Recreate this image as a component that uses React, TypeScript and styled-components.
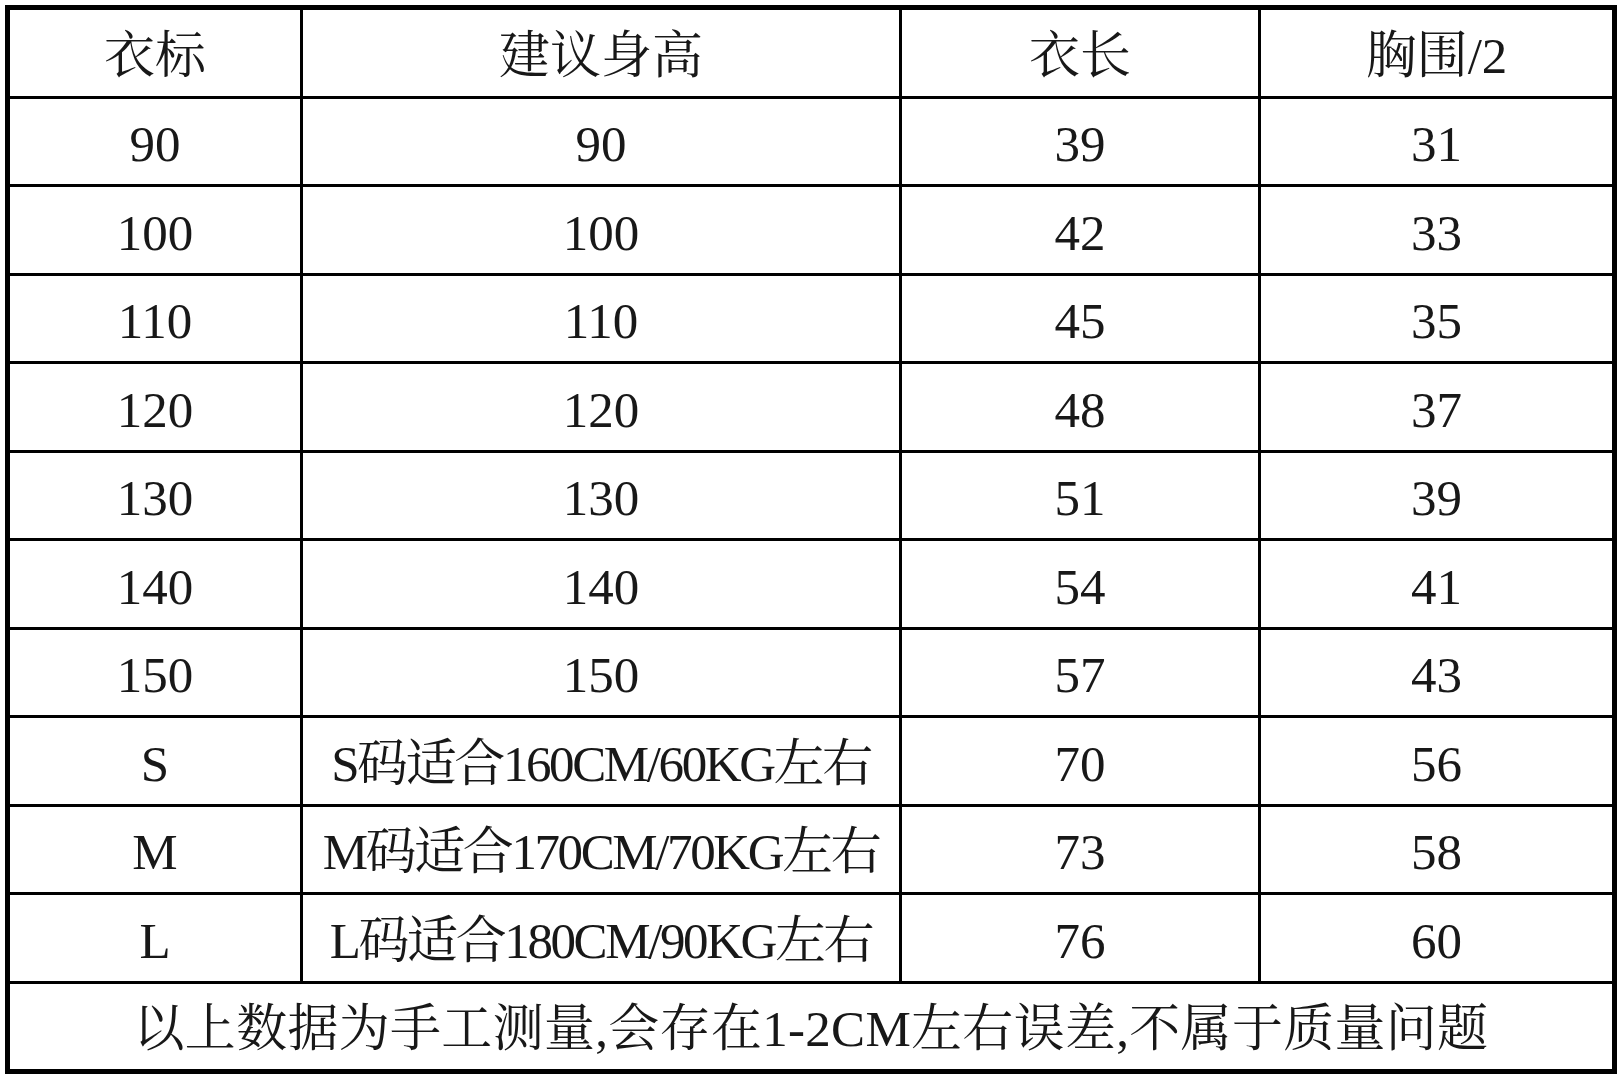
import styled, { createGlobalStyle } from 'styled-components'

const GlobalStyle = createGlobalStyle`
  html, body {
    margin: 0;
    padding: 0;
    background: #ffffff;
  }
`

const Page = styled.div`
  padding: 5px;
  width: 1623px;
  box-sizing: border-box;
`

const SizeGrid = styled.div`
  display: grid;
  grid-template-columns: 290px 596px 356px 351px;
  grid-auto-rows: 85.5px;
  gap: 3px;
  padding: 5px;
  width: 1612px;
  box-sizing: border-box;
  background: #000000;
`

const Cell = styled.div<{ $full?: boolean; $tight?: boolean }>`
  display: flex;
  align-items: center;
  justify-content: center;
  padding-top: 7px;
  box-sizing: border-box;
  background: #ffffff;
  color: #181818;
  font-family: 'Liberation Serif', 'Noto Serif CJK SC', 'Noto Sans CJK SC', serif;
  font-size: 51px;
  line-height: 1;
  white-space: nowrap;
  letter-spacing: ${(p) => (p.$tight ? '-2.4px' : p.$full ? '0.3px' : '0')};
  grid-column: ${(p) => (p.$full ? '1 / -1' : 'auto')};
`

const header = ['衣标', '建议身高', '衣长', '胸围/2']

const rows: string[][] = [
  ['90', '90', '39', '31'],
  ['100', '100', '42', '33'],
  ['110', '110', '45', '35'],
  ['120', '120', '48', '37'],
  ['130', '130', '51', '39'],
  ['140', '140', '54', '41'],
  ['150', '150', '57', '43'],
  ['S', 'S码适合160CM/60KG左右', '70', '56'],
  ['M', 'M码适合170CM/70KG左右', '73', '58'],
  ['L', 'L码适合180CM/90KG左右', '76', '60'],
]

function App() {
  return (
    <Page>
      <GlobalStyle />
      <SizeGrid>
        {header.map((h) => (
          <Cell key={h}>{h}</Cell>
        ))}
        {rows.map((r, i) =>
          r.map((v, j) => (
            <Cell key={`${i}-${j}`} $tight={v.length > 6}>
              {v}
            </Cell>
          ))
        )}
        <Cell $full>以上数据为手工测量,会存在1-2CM左右误差,不属于质量问题</Cell>
      </SizeGrid>
    </Page>
  )
}

export default App
